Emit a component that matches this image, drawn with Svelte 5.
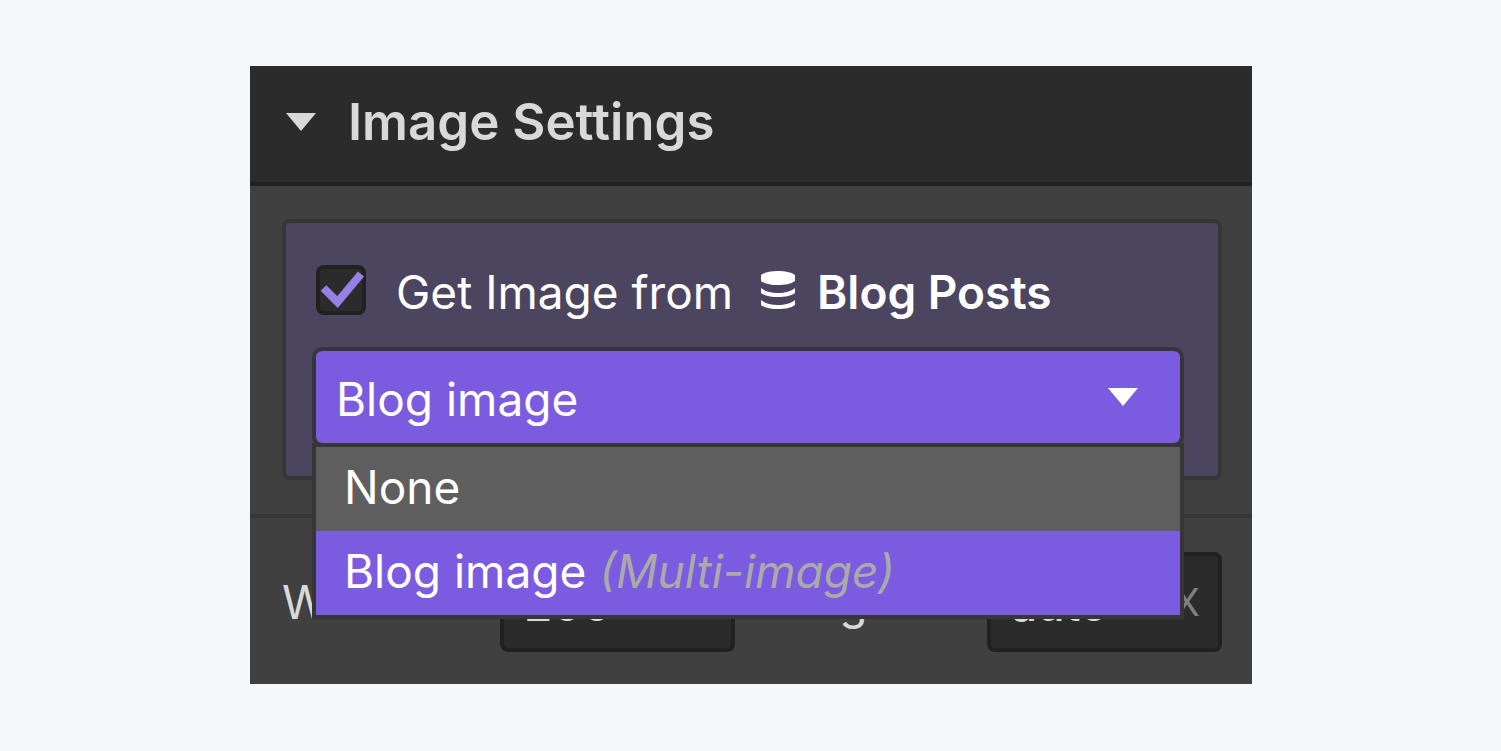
<script lang="ts">
  // Image settings panel: binds an image to a collection field,
  // with manual width and height below.

  interface FieldOption {
    value: string;
    label: string;
    hint?: string;
  }

  const options: FieldOption[] = [
    { value: "none", label: "None" },
    { value: "blog-image", label: "Blog image", hint: "(Multi-image)" },
  ];

  let expanded = $state(true);
  let bound = $state(true);
  let menuOpen = $state(true);
  let selected = $state("blog-image");
  let width = $state("200");
  let height = $state("auto");

  function choose(value: string) {
    selected = value;
    menuOpen = false;
  }

  function toggleMenu(e: MouseEvent) {
    e.preventDefault();
    menuOpen = !menuOpen;
  }
</script>

<main class="page">
  <section class="panel">
    <h2 class="panel-title">
      <button class="panel-toggle" aria-expanded={expanded} onclick={() => (expanded = !expanded)}>
        <svg class="arrow" viewBox="0 0 30 18" aria-hidden="true"><path d="M0 0h30L15 18z" /></svg>
        Image Settings
      </button>
    </h2>

    {#if expanded}
      <div class="source">
        <div class="binding">
          <label class="binding-label">
            <span class="check">
              <input type="checkbox" bind:checked={bound} />
              {#if bound}
                <svg class="tick" viewBox="0 0 50 50" aria-hidden="true"><path d="M7.500 23L21.500 37L45 9" /></svg>
              {/if}
            </span>
            <span class="binding-text">Get Image from</span>
            <svg class="database" viewBox="0 0 34 38" aria-hidden="true">
              <path d="M0 4C4 1 10 0 17 0s13 1 17 4v6c-4 3-10 4-17 4S4 13 0 10z" />
              <path d="M0 17c4 3.500 10 5 17 5s13-1.500 17-5v5c-4 3-10 4-17 4S4 25 0 22z" />
              <path d="M0 29c4 3.500 10 5 17 5s13-1.500 17-5v5c-4 3-10 4-17 4S4 37 0 34z" />
            </svg>
            <strong>Blog Posts</strong>
          </label>

          <div class="dropdown">
            <select aria-label="Collection field" bind:value={selected} onmousedown={toggleMenu}>
              {#each options as o}
                <option value={o.value}>{o.label}</option>
              {/each}
            </select>
            <svg class="arrow dropdown-arrow" viewBox="0 0 30 18" aria-hidden="true"><path d="M0 0h30L15 18z" /></svg>
            {#if menuOpen}
              <div class="menu" role="listbox" aria-label="Collection field options">
                {#each options as o}
                  <button
                    class="menu-item"
                    class:is-selected={o.value === selected}
                    role="option"
                    aria-selected={o.value === selected}
                    onclick={() => choose(o.value)}
                  >
                    {o.label}
                    {#if o.hint}<em>{o.hint}</em>{/if}
                  </button>
                {/each}
              </div>
            {/if}
          </div>
        </div>
      </div>

      <div class="size">
        <label for="image-width">Width</label>
        <div class="size-field">
          <input id="image-width" type="text" bind:value={width} />
          <span class="unit">PX</span>
        </div>
        <label for="image-height">Height</label>
        <div class="size-field">
          <input id="image-height" type="text" bind:value={height} />
          <span class="unit">PX</span>
        </div>
      </div>
    {/if}
  </section>
</main>

<style>
  :global(body) {
    margin: 0;
    background: #f6f7f9;
  }
  .page {
    box-sizing: border-box;
    min-height: 100vh;
    padding: 66px 249px 66px 250px;
    font: 400 46px/56px Inter, "Liberation Sans", sans-serif;
    color: #fff;
  }
  .panel {
    background: #404040;
  }
  button, input, select {
    box-sizing: border-box;
    margin: 0;
    border: 0;
    font: inherit;
    color: inherit;
  }
  .panel-title {
    margin: 0;
    font-size: 51px;
    font-weight: 600;
    background: #2b2b2b;
    border-bottom: 4px solid #212121;
  }
  .panel-toggle {
    display: flex;
    align-items: center;
    gap: 32px;
    width: 100%;
    height: 116px;
    padding: 0 36px 4px;
    background: none;
    color: #d9d9d9;
    text-align: left;
  }
  .arrow {
    flex: none;
    width: 30px;
    height: 18px;
    fill: currentColor;
  }
  .source {
    padding: 33px 30px 34px 32px;
    border-bottom: 4px solid #363636;
  }
  .binding {
    padding: 42px 34px 29px 26px;
    background: #4c455f;
    border: 4px solid #363636;
    border-radius: 8px;
  }
  .binding-label {
    display: flex;
    align-items: center;
    height: 50px;
    margin-bottom: 32px;
    padding-left: 4px;
    white-space: nowrap;
  }
  .binding-text,
  .binding-label strong {
    padding-top: 4px;
  }
  .binding-label strong {
    font-weight: 600;
  }
  .check {
    position: relative;
    display: flex;
    margin-right: 30px;
  }
  .check input {
    width: 50px;
    height: 50px;
    appearance: none;
    background: #2b2b2b;
    border: 4px solid #212121;
    border-radius: 8px;
  }
  .tick {
    position: absolute;
    inset: 0;
    fill: none;
    stroke: #9580e6;
    stroke-width: 8;
    pointer-events: none;
  }
  .database {
    flex: none;
    width: 34px;
    height: 38px;
    margin: 0 22px 0 28px;
    fill: #fff;
  }
  .dropdown {
    position: relative;
  }
  .dropdown select {
    display: block;
    width: 100%;
    height: 100px;
    padding: 4px 80px 0 20px;
    appearance: none;
    background: #7b5ce0;
    border: 4px solid #363636;
    border-radius: 10px;
  }
  .dropdown-arrow {
    position: absolute;
    top: 41px;
    right: 46px;
    pointer-events: none;
  }
  .menu {
    position: absolute;
    z-index: 1;
    top: 96px;
    left: 0;
    right: 0;
    border: 4px solid #363636;
    background: #5e5e5e;
  }
  .menu-item {
    display: block;
    width: 100%;
    height: 84px;
    padding: 0 28px 4px;
    background: none;
    text-align: left;
  }
  .menu-item.is-selected {
    background: #7b5ce0;
  }
  .menu-item em {
    color: #aaa;
  }
  .size {
    display: grid;
    grid-template-columns: 186px minmax(0, 1fr) 188px minmax(0, 1fr);
    align-items: center;
    column-gap: 32px;
    padding: 34px 30px 32px 32px;
    color: #d9d9d9;
  }
  .size-field {
    display: flex;
    align-items: center;
    box-sizing: border-box;
    height: 100px;
    padding: 0 18px 0 20px;
    background: #2b2b2b;
    border: 4px solid #212121;
    border-radius: 8px;
  }
  .size-field input {
    flex: 1;
    min-width: 0;
    padding: 4px 0 0;
    background: none;
    font-weight: 500;
  }
  .unit {
    font-size: 38px;
    color: #808080;
  }
</style>
